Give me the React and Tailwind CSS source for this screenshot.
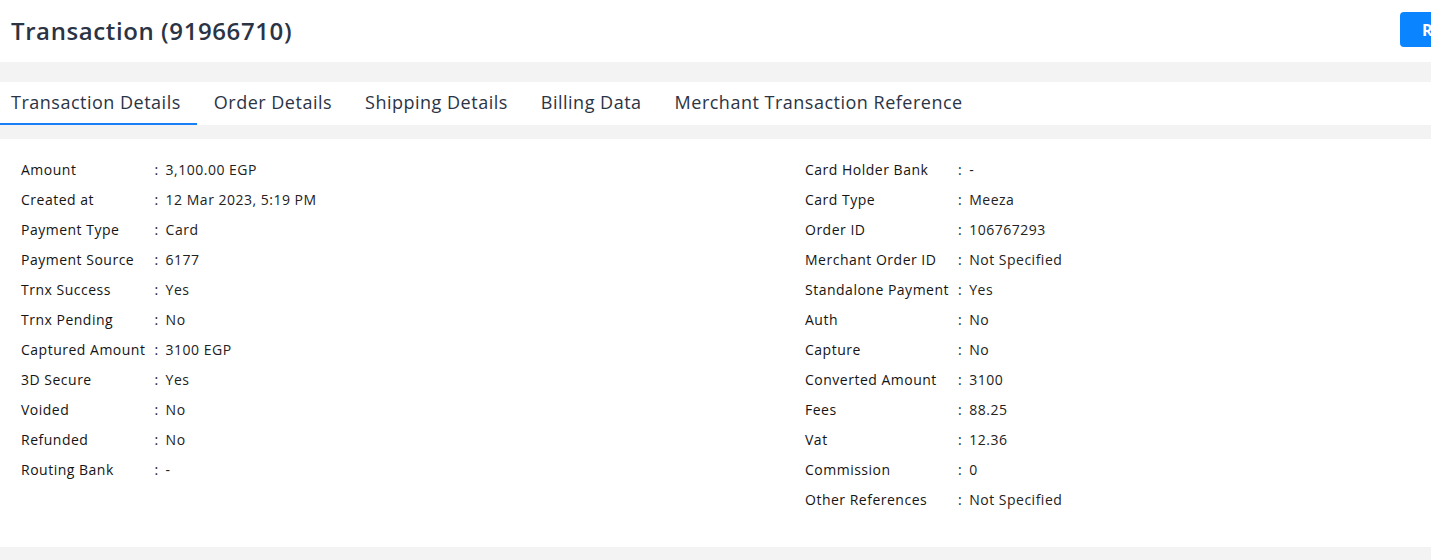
import React, { useState } from "react"

const left = [
  ["Amount", "3,100.00 EGP"],
  ["Created at", "12 Mar 2023, 5:19 PM"],
  ["Payment Type", "Card"],
  ["Payment Source", "6177"],
  ["Trnx Success", "Yes"],
  ["Trnx Pending", "No"],
  ["Captured Amount", "3100 EGP"],
  ["3D Secure", "Yes"],
  ["Voided", "No"],
  ["Refunded", "No"],
  ["Routing Bank", "-"],
]

const right = [
  ["Card Holder Bank", "-"],
  ["Card Type", "Meeza"],
  ["Order ID", "106767293"],
  ["Merchant Order ID", "Not Specified"],
  ["Standalone Payment", "Yes"],
  ["Auth", "No"],
  ["Capture", "No"],
  ["Converted Amount", "3100"],
  ["Fees", "88.25"],
  ["Vat", "12.36"],
  ["Commission", "0"],
  ["Other References", "Not Specified"],
]

const tabs = ["Transaction Details", "Order Details", "Shipping Details", "Billing Data", "Merchant Transaction Reference"]

const Rows = ({ rows }) => (
  <div className="grid grid-cols-[max-content_max-content_1fr] gap-y-[11px] text-[14px] leading-[19px] tracking-[0.5px] text-[#1c1c1c]">
    {rows.map(([k, v]) => (
      <React.Fragment key={k}>
        <div className="pr-[9px] font-medium text-[#141414]">{k}</div>
        <div className="pr-[7px]">:</div>
        <div className="text-[#222]">{v}</div>
      </React.Fragment>
    ))}
  </div>
)

export default function App() {
  const [tab, setTab] = useState(0)

  return (
    <div className="w-[1431px] h-[560px] overflow-hidden bg-[#f3f3f3] font-['Open_Sans',sans-serif]">
      <div className="w-[1568px]">
        <div className="flex justify-between items-center h-[62px] bg-white pl-[11px]">
          <h1 className="text-[24px] font-semibold tracking-[0.6px] text-[#2b3445]">Transaction (91966710)</h1>
          <button className="h-[35px] w-[120px] mr-[48px] mt-[-3px] rounded-[4px] bg-[#0a84ff] text-white font-bold text-[16px] text-left pl-[22px]">
            Refund
          </button>
        </div>

        <div className="h-[20px]"></div>

        <div className="flex h-[43px] bg-white">
          {tabs.map((t, i) => (
            <button
              key={t}
              onClick={() => setTab(i)}
              className={
                "h-full pl-[11px] pr-[16px] mr-[6px] text-[18px] tracking-[0.5px] text-[#2b3445] border-b-[2px] " +
                (tab === i ? "border-[#1a7ef5]" : "border-transparent")
              }
            >
              {t}
            </button>
          ))}
        </div>

        <div className="h-[14px]"></div>

        <div className="grid grid-cols-[784px_1fr] bg-white h-[408px] pt-[21px]">
          <div className="pl-[21px]"><Rows rows={left} /></div>
          <div className="pl-[21px]"><Rows rows={right} /></div>
        </div>
      </div>
    </div>
  )
}
